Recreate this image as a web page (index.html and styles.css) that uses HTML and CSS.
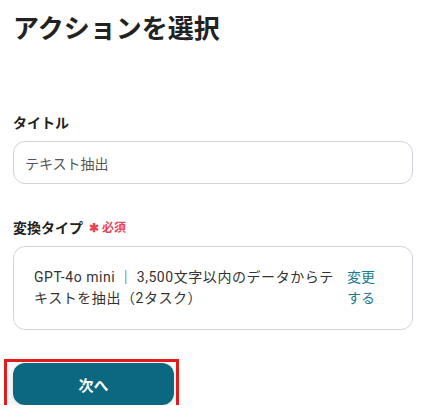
FILE: index.html
```html
<!DOCTYPE html>
<html lang="ja">
<head>
    <meta charset="UTF-8">
    <meta name="viewport" content="width=device-width, initial-scale=1.0">
    <title>アクションを選択</title>
    <link rel="stylesheet" href="styles.css">
</head>
<body>
    <div class="page">
        <h1>アクションを選択</h1>

        <div class="field field-title">
            <label class="field-label">タイトル</label>
            <div class="text-input">テキスト抽出</div>
        </div>

        <div class="field field-type">
            <label class="field-label">変換タイプ<span class="required">✱ 必須</span></label>
            <div class="select-box">
                <div class="select-text">GPT-4o mini&thinsp;｜&thinsp;3,500文字以内のデータからテキストを抽出（2タスク）</div>
                <a class="select-change">変更する</a>
            </div>
        </div>

        <div class="actions">
            <button class="next-button">次へ</button>
            <span class="highlight"></span>
        </div>
    </div>
</body>
</html>
```

FILE: styles.css
```css
* {
    box-sizing: border-box;
}

body {
    margin: 0;
    background-color: #ffffff;
    color: #222222;
    font-family: Roboto, "Noto Sans CJK JP", sans-serif;
}

.page {
    padding: 11px 15px 0 13px;
}

h1 {
    margin: 0;
    font-size: 26px;
    line-height: 36px;
    font-weight: 700;
    color: #222222;
}

.field {
    display: flex;
    flex-direction: column;
    gap: 8px;
}
.field-title {
    margin-top: 66px;
}
.field-type {
    margin-top: 34px;
}

.field-label {
    font-size: 14px;
    line-height: 20px;
    font-weight: 700;
    color: #222222;
    display: flex;
    align-items: center;
}

.required {
    margin-left: 6px;
    font-size: 12px;
    font-weight: 700;
    color: #e8455a;
}

.text-input {
    height: 43px;
    border: 1px solid #cfd3da;
    border-radius: 12px;
    padding: 0 11px;
    display: flex;
    align-items: center;
    font-size: 14px;
    color: #555555;
}

.select-box {
    height: 84px;
    border: 1px solid #cfd3da;
    border-radius: 12px;
    padding: 0 37px 0 20px;
    display: flex;
    align-items: center;
    gap: 12px;
    font-size: 14px;
    line-height: 21px;
}
.select-text {
    flex: 1;
    color: #333333;
    letter-spacing: 0.04em;
}
.select-change {
    width: 28px;
    color: #1b7a90;
    cursor: pointer;
}

.actions {
    position: relative;
    margin-top: 33px;
    width: 161px;
}

.next-button {
    display: block;
    width: 161px;
    height: 42px;
    border: none;
    border-radius: 12px;
    background-color: #0c6781;
    color: #ffffff;
    font-family: inherit;
    font-size: 15px;
    font-weight: 700;
    box-shadow: 0 2px 10px rgba(0, 0, 0, 0.15);
    cursor: pointer;
}

.highlight {
    position: absolute;
    top: -4px;
    left: -9px;
    right: -5px;
    bottom: -4px;
    border: 3px solid #e31b1b;
    pointer-events: none;
}
```
